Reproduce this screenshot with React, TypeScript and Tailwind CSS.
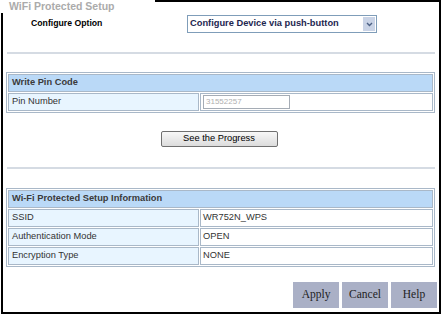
import React from "react";

const font = { fontFamily: '"Liberation Sans", Arial, sans-serif' };

function Cell({ label, value }: { label: string; value: React.ReactNode }) {
  return (
    <div className="grid grid-cols-[191px_1fr] gap-[1px]">
      <div className="h-[18px] border border-[#a9b8c8] bg-[#e8f5ff] pl-[3px] flex items-center text-[9.3px] text-[#333]">
        {label}
      </div>
      <div className="h-[18px] border border-[#a9b8c8] bg-white pl-[2px] flex items-center text-[9.3px] text-[#333]">
        {value}
      </div>
    </div>
  );
}

function Table({ title, children }: { title: string; children: React.ReactNode }) {
  return (
    <div className="ml-[3px] w-[429px] border border-[#a9b8c8] p-[1px] flex flex-col gap-[1px]">
      <div className="h-[18px] border border-[#a9b8c8] bg-[#bad9f7] pl-[3px] flex items-center text-[9.3px] font-bold text-[#3a3a3a]">
        {title}
      </div>
      {children}
    </div>
  );
}

export default function App() {
  return (
    <div className="w-[443px] h-[317px] bg-white pl-[1px]" style={font}>
      <div className="relative w-[440px] h-[314px] border-2 border-black flex flex-col">
        <div className="absolute -top-[2px] -left-[2px] h-[13px] bg-white pl-[8px] pr-[40px] text-[10.5px] font-bold leading-[12px] text-[#ababab]">
          WiFi Protected Setup
        </div>

        <div className="mt-[13px] flex items-center h-[18px]">
          <div className="w-[184px] pl-[28px] text-[8.7px] font-bold text-black">Configure Option</div>
          <div className="w-[190px] h-[18px] border border-[#7f9db9] bg-white flex items-center justify-between pl-[2px] pr-[1px]">
            <span className="text-[9.3px] font-bold text-[#1d2650]">Configure Device via push-button</span>
            <span className="w-[12px] h-[14px] bg-[#c9d3e6] flex items-center justify-center">
              <svg width="7" height="5" viewBox="0 0 7 5">
                <path d="M1 1 L3.5 3.5 L6 1" stroke="#4d6185" strokeWidth="1.4" fill="none" />
              </svg>
            </span>
          </div>
        </div>

        <div className="mt-[19px] mx-[4px] h-[2px] bg-[#d5dbe3]" />

        <div className="mt-[18px]">
          <Table title="Write Pin Code">
            <Cell
              label="Pin Number"
              value={
                <div className="w-[87px] h-[14px] border border-[#a5acb5] pl-[2px] flex items-center text-[8px] text-[#b0b0b0]">
                  31552257
                </div>
              }
            />
          </Table>
        </div>

        <div className="mt-[18px] flex justify-center">
          <button className="ml-[-4px] w-[117px] h-[16px] border border-[#707070] rounded-[2px] bg-gradient-to-b from-[#f8f8f8] to-[#dcdcdc] text-[9.3px] text-black flex items-center justify-center">
            See the Progress
          </button>
        </div>

        <div className="mt-[20px] mx-[4px] h-[2px] bg-[#d5dbe3]" />

        <div className="mt-[19px]">
          <Table title="Wi-Fi Protected Setup Information">
            <Cell label="SSID" value="WR752N_WPS" />
            <Cell label="Authentication Mode" value="OPEN" />
            <Cell label="Encryption Type" value="NONE" />
          </Table>
        </div>

        <div className="mt-[15px] flex justify-end gap-[3px] pr-[2px]">
          {["Apply", "Cancel", "Help"].map((b) => (
            <button
              key={b}
              className="w-[46px] h-[26px] bg-[#aab0c6] text-[11.5px] text-[#222] flex items-center justify-center"
              style={{ fontFamily: '"Liberation Serif", "Times New Roman", serif' }}
            >
              {b}
            </button>
          ))}
        </div>
      </div>
    </div>
  );
}
